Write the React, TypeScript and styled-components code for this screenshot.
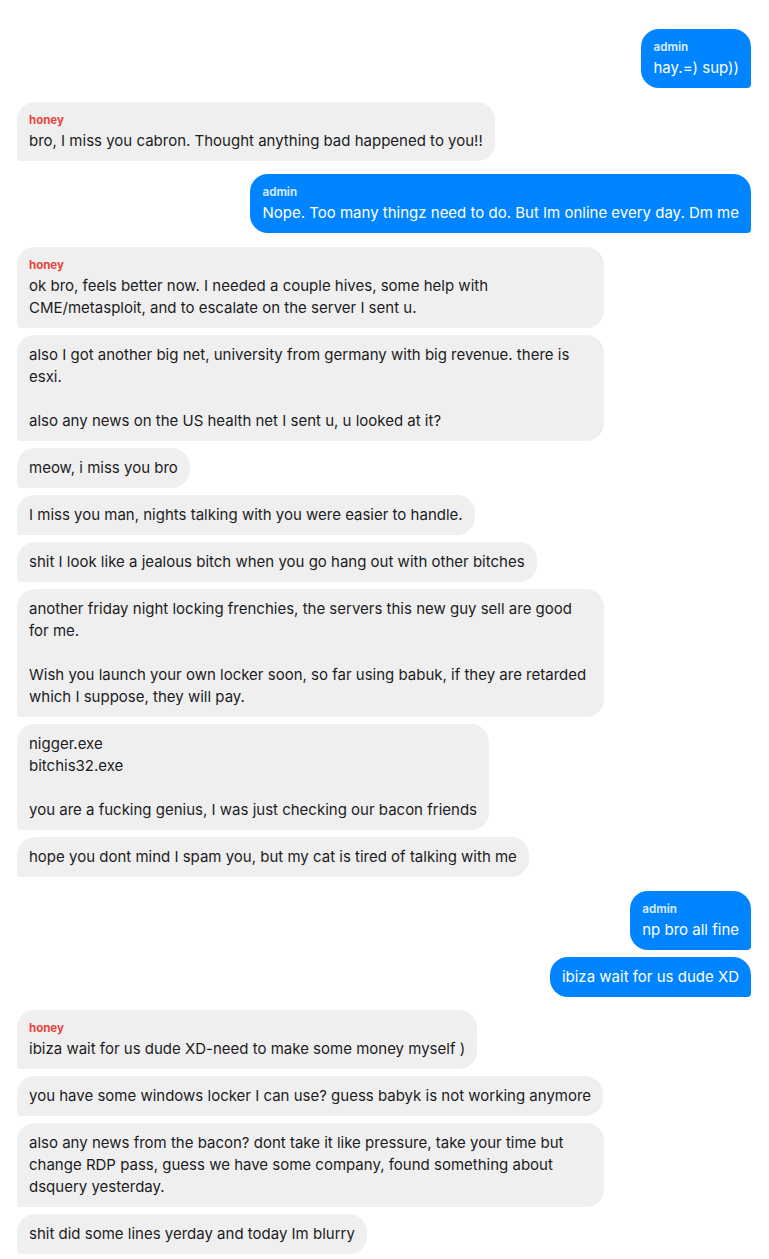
import React from "react";
import styled, { createGlobalStyle, css } from "styled-components";

const GlobalStyle = createGlobalStyle`
  html, body {
    margin: 0;
    padding: 0;
    background: #ffffff;
  }
  body {
    font-family: Inter, "Noto Sans", "Liberation Sans", sans-serif;
    -webkit-font-smoothing: antialiased;
  }
`;

type Sender = "admin" | "honey";

interface Message {
  from: Sender;
  text: string;
}

const messages: Message[] = [
  { from: "admin", text: "hay.=) sup))" },
  { from: "honey", text: "bro, I miss you cabron. Thought anything bad happened to you!!" },
  { from: "admin", text: "Nope. Too many thingz need to do. But Im online every day. Dm me" },
  {
    from: "honey",
    text: "ok bro, feels better now. I needed a couple hives, some help with CME/metasploit, and to escalate on the server I sent u.",
  },
  {
    from: "honey",
    text: "also I got another big net, university from germany with big revenue. there is esxi.\n\nalso any news on the US health net I sent u, u looked at it?",
  },
  { from: "honey", text: "meow, i miss you bro" },
  { from: "honey", text: "I miss you man, nights talking with you were easier to handle." },
  { from: "honey", text: "shit I look like a jealous bitch when you go hang out with other bitches" },
  {
    from: "honey",
    text: "another friday night locking frenchies, the servers this new guy sell are good for me.\n\nWish you launch your own locker soon, so far using babuk, if they are retarded which I suppose, they will pay.",
  },
  {
    from: "honey",
    text: "nigger.exe\nbitchis32.exe\n\nyou are a fucking genius, I was just checking our bacon friends",
  },
  { from: "honey", text: "hope you dont mind I spam you, but my cat is tired of talking with me" },
  { from: "admin", text: "np bro all fine" },
  { from: "admin", text: "ibiza wait for us dude XD" },
  { from: "honey", text: "ibiza wait for us dude XD-need to make some money myself )" },
  { from: "honey", text: "you have some windows locker I can use? guess babyk is not working anymore" },
  {
    from: "honey",
    text: "also any news from the bacon? dont take it like pressure, take your time but change RDP pass, guess we have some company, found something about dsquery yesterday.",
  },
  { from: "honey", text: "shit did some lines yerday and today Im blurry" },
];

const Thread = styled.div`
  display: flex;
  flex-direction: column;
  padding: 29px 18px 4px 17px;
`;

const Row = styled.div<{ $mine: boolean; $newGroup: boolean }>`
  display: flex;
  justify-content: ${(p) => (p.$mine ? "flex-end" : "flex-start")};
  margin-top: ${(p) => (p.$newGroup ? "13.7px" : "7px")};
  &:first-child {
    margin-top: 0;
  }
`;

const Bubble = styled.div<{ $mine: boolean; $named: boolean }>`
  box-sizing: border-box;
  max-width: 80%;
  padding: ${(p) => (p.$named ? "10px 12px 9px" : "9px 12px")};
  border-radius: 18px;
  font-size: 15px;
  line-height: 22px;
  white-space: pre-line;
  word-wrap: break-word;
  ${(p) =>
    p.$mine
      ? css`
          background: #0084ff;
          color: #ffffff;
          border-bottom-right-radius: 4px;
        `
      : css`
          background: #efefef;
          color: #1c1c1e;
          border-bottom-left-radius: 4px;
        `}
`;

const Name = styled.div<{ $mine: boolean }>`
  font-size: 11.5px;
  font-weight: 700;
  line-height: 16px;
  margin-bottom: 2px;
  color: ${(p) => (p.$mine ? "rgba(255, 255, 255, 0.82)" : "#e8453c")};
`;

export default function App() {
  return (
    <>
      <GlobalStyle />
      <Thread>
        {messages.map((m, i) => {
          const prev = messages[i - 1];
          const mine = m.from === "admin";
          const newGroup = !prev || prev.from !== m.from;
          return (
            <Row key={i} $mine={mine} $newGroup={newGroup}>
              <Bubble $mine={mine} $named={newGroup}>
                {newGroup && <Name $mine={mine}>{m.from}</Name>}
                {m.text}
              </Bubble>
            </Row>
          );
        })}
      </Thread>
    </>
  );
}
